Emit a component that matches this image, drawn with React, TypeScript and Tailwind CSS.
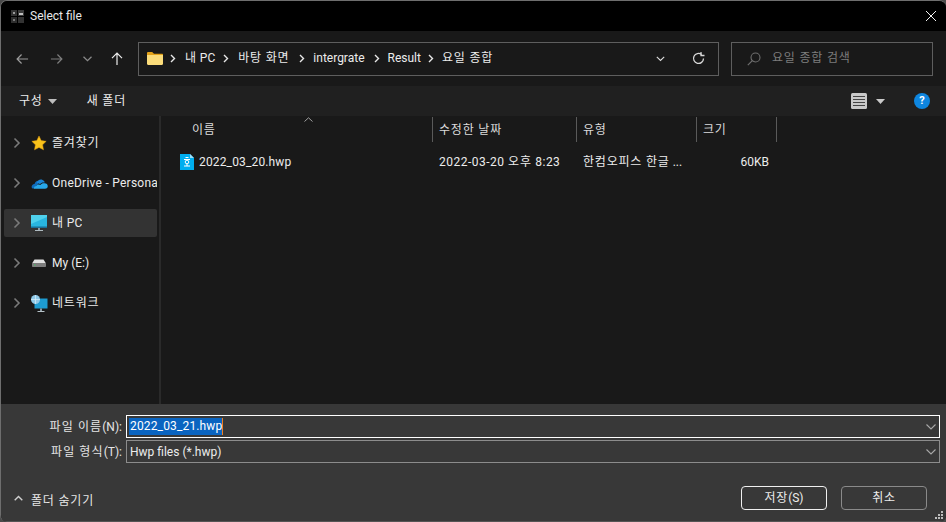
import React from "react";

const font = { fontFamily: 'Roboto, "Noto Sans CJK KR", sans-serif' };

function H({ children, wide }: { children: React.ReactNode; wide?: boolean }) {
  return <span className={wide ? "tracking-[1.1px]" : "tracking-[0.8px]"}>{children}</span>;
}

function Chevron() {
  return (
    <svg width="8" height="12" viewBox="0 0 8 12" className="shrink-0">
      <path d="M1.5 1.5 6 6l-4.5 4.5" fill="none" stroke="#7a7a7a" strokeWidth="1.6" />
    </svg>
  );
}

function Sep() {
  return (
    <svg width="6" height="9" viewBox="0 0 6 9" className="shrink-0">
      <path d="M1 1l3.5 3.5L1 8" fill="none" stroke="#e8e8e8" strokeWidth="1.4" />
    </svg>
  );
}

function Star() {
  return (
    <svg width="16" height="16" viewBox="0 0 16 16">
      <path d="M8 1l2.2 4.6 5 .7-3.6 3.5.9 5L8 12.4l-4.5 2.4.9-5L.8 6.3l5-.7z" fill="#f9c21a" stroke="#e09a10" strokeWidth=".5" />
    </svg>
  );
}

function Cloud() {
  return (
    <svg width="17" height="11" viewBox="0 0 18 12">
      <path d="M1.5 11.5C.2 10.6 0 8.6 1.2 7.5 2 6.7 3 6.5 3.6 6.6 4 4.6 5.6 3 7.6 3c.8 0 1.6.3 2.2.8L3 11.5z" fill="#0f6cbd" />
      <path d="M6 5.5C7 1.2 11.5.3 14 3.3c.4.5.6 1 .7 1.6-2.6-.4-4 .2-5.2 1.8C8.6 5.8 7.4 5.4 6 5.5z" fill="#1a86d8" />
      <path d="M3 11.8h12c2 0 3-1.3 3-2.8 0-1.9-1.5-3.3-3.6-3.2-1.6-.3-3.4.3-4.4 1.8C8.4 6.5 6.3 6.8 5.6 8.6 3.9 8.5 2.6 9.8 3 11.8z" fill="#28a8ea" />
    </svg>
  );
}

function Monitor() {
  return (
    <svg width="16" height="16" viewBox="0 0 16 16">
      <rect x="0" y="0" width="16" height="13" fill="#29b6e0" />
      <path d="M0 0h16v2L0 9z" fill="#4fd0ec" />
      <rect x="0" y="11.5" width="16" height="1.5" fill="#1a6f96" />
      <rect x="7" y="13" width="2" height="2" fill="#8b9aa3" />
      <rect x="4" y="15" width="8" height="1" fill="#aebac0" />
    </svg>
  );
}

function Drive() {
  return (
    <svg width="16" height="16" viewBox="0 0 16 16">
      <path d="M3.5 4.5h9l2.5 4H1z" fill="#e2e2e2" />
      <path d="M1 8.5h14v2.5c0 .6-.4 1-1 1H2c-.6 0-1-.4-1-1z" fill="#7e7e7e" />
      <rect x="3" y="9.5" width="1.5" height="1" fill="#3fbf5f" />
    </svg>
  );
}

function Network() {
  return (
    <svg width="17" height="17" viewBox="0 0 17 17">
      <rect x="3.5" y="3.5" width="13" height="10" fill="#1d9bd1" />
      <rect x="9" y="13.5" width="2" height="2.5" fill="#8b9aa3" />
      <rect x="6.5" y="16" width="7" height="1" fill="#b6c2c8" />
      <circle cx="4.5" cy="4.5" r="4.5" fill="#8fc9e8" />
      <path d="M4.5 0v9M0 4.5h9" stroke="#d8eefa" strokeWidth=".7" />
    </svg>
  );
}

function FolderIcon() {
  return (
    <svg width="16" height="13" viewBox="0 0 16 13">
      <path d="M0 1.2C0 .5.5 0 1.2 0h4L7 1.7h8c.6 0 1 .4 1 1V4H0z" fill="#e3a21a" />
      <path d="M0 3h16v8.8c0 .7-.5 1.2-1.2 1.2H1.2C.5 13 0 12.5 0 11.8z" fill="#fbdc7a" />
    </svg>
  );
}

function HwpIcon() {
  return (
    <svg width="14" height="16" viewBox="0 0 14 16">
      <path d="M0 0h10l4 4v12H0z" fill="#00aeef" />
      <path d="M10 0l4 4h-4z" fill="#9fe0fa" />
      <path d="M5.5 3.5h3M4 5.5h6M4 12h6M7 10v2" stroke="#fff" strokeWidth="1" fill="none" />
      <circle cx="7" cy="8" r="1.8" fill="none" stroke="#fff" strokeWidth="1" />
    </svg>
  );
}

function Nav({ label, icon, active }: { label: React.ReactNode; icon: React.ReactNode; active?: boolean }) {
  return (
    <div className={`h-7 w-[153px] flex items-center rounded-[2px] pl-[9px] ${active ? "bg-[#333333]" : ""}`}>
      <Chevron />
      <div className="w-[18px] ml-[9px] flex justify-center shrink-0">{icon}</div>
      <span className="ml-[4px] whitespace-nowrap overflow-hidden">{label}</span>
    </div>
  );
}

function ColHead({ w, label, pl = 6 }: { w: number; label: string; pl?: number }) {
  return (
    <div
      className="h-[25px] pt-[1px] border-r border-[#5a5a5a] flex items-center shrink-0 text-[#dcdcdc]"
      style={{ width: w, paddingLeft: pl }}
    >
      <H>{label}</H>
    </div>
  );
}

function DropChevron() {
  return (
    <svg width="10" height="6" viewBox="0 0 10 6" className="shrink-0">
      <path d="M.5.5 5 5 9.5.5" fill="none" stroke="#a8a8a8" strokeWidth="1.1" />
    </svg>
  );
}

export default function App() {
  return (
    <div className="w-[946px] h-[522px] bg-[#4a4a4a] overflow-hidden">
      <div
        className="relative w-[946px] h-[522px] bg-[#191919] text-[#f0f0f0] text-[12px] leading-[16px] flex flex-col overflow-hidden rounded-[7px] border-l border-t border-[#6e6e6e]"
        style={font}
      >
        {/* Title bar */}
        <div className="h-[30px] bg-black flex items-center pl-[10px] pr-[10px] shrink-0">
          <svg width="13" height="13" viewBox="0 0 13 13">
            <rect width="6" height="6" fill="#333333" />
            <rect x="7" width="6" height="6" fill="#3a3a3a" />
            <rect y="7" width="6" height="6" fill="#2e2e2e" />
            <rect x="7" y="7" width="6" height="6" fill="#333333" />
            <rect x="2" y="2" width="2" height="2" fill="#9a9a9a" />
            <rect x="8" y="3" width="4" height="2" fill="#c0c0c0" />
            <rect x="2" y="9" width="2" height="2" fill="#777777" />
          </svg>
          <span className="ml-[6px] text-[#e8e8e8]">Select file</span>
          <svg width="10" height="10" viewBox="0 0 10 10" className="ml-auto">
            <path d="M0 0l10 10M10 0L0 10" stroke="#f2f2f2" strokeWidth="1" />
          </svg>
        </div>

        {/* Address row */}
        <div className="h-[55px] flex items-center shrink-0 pr-[13px]">
          <div className="w-[137px] flex items-center pl-[15px] shrink-0">
            <svg width="13" height="12" viewBox="0 0 14 12">
              <path d="M13 6H1.5M6 1.2 1.2 6 6 10.8" fill="none" stroke="#9a9a9a" strokeWidth="1.3" />
            </svg>
            <svg width="13" height="12" viewBox="0 0 14 12" className="ml-[21px]">
              <path d="M1 6h11.5M8 1.2 12.8 6 8 10.8" fill="none" stroke="#7c7c7c" strokeWidth="1.3" />
            </svg>
            <svg width="9" height="6" viewBox="0 0 9 6" className="ml-[20px]">
              <path d="M.5.8 4.5 4.6 8.5.8" fill="none" stroke="#8a8a8a" strokeWidth="1.3" />
            </svg>
            <svg width="12" height="13" viewBox="0 0 12 13" className="ml-[19px]">
              <path d="M6 13V1.2M1 6.2 6 1.2l5 5" fill="none" stroke="#ededed" strokeWidth="1.2" />
            </svg>
          </div>
          <div className="w-[581px] h-[34px] border border-[#5e5e5e] flex items-center pl-[8px] pr-[13px] shrink-0 text-[#ececec]">
            <FolderIcon />
            <span className="ml-[7px]"><Sep /></span>
            <span className="ml-[9px] -mt-[2px]"><H>내</H> PC</span>
            <span className="ml-[8px]"><Sep /></span>
            <span className="ml-[9px] -mt-[2px]"><H>바탕 화면</H></span>
            <span className="ml-[10px]"><Sep /></span>
            <span className="ml-[8px] -mt-[2px]">intergrate</span>
            <span className="ml-[9px]"><Sep /></span>
            <span className="ml-[8px] -mt-[2px]">Result</span>
            <span className="ml-[7px]"><Sep /></span>
            <span className="ml-[8px] -mt-[2px]"><H>요일 종합</H></span>
            <svg width="9" height="6" viewBox="0 0 9 6" className="ml-auto">
              <path d="M.8.8 4.5 4.5 8.2.8" fill="none" stroke="#dddddd" strokeWidth="1.1" />
            </svg>
            <svg width="13" height="13" viewBox="0 0 13 13" className="ml-[27px]">
              <path d="M11.5 6.5A5 5 0 1 1 9.6 2.5" fill="none" stroke="#d8d8d8" strokeWidth="1.3" />
              <path d="M9 0v3.5h3.5" fill="none" stroke="#d8d8d8" strokeWidth="1.3" />
            </svg>
          </div>
          <div className="ml-[12px] flex-1 h-[34px] border border-[#5e5e5e] flex items-center pl-[15px] text-[#7d7d7d]">
            <svg width="14" height="14" viewBox="0 0 14 14">
              <circle cx="8.5" cy="5.5" r="4.5" fill="none" stroke="#6e6e6e" strokeWidth="1.1" />
              <path d="M5.3 8.7.8 13.2" stroke="#6e6e6e" strokeWidth="1.2" />
            </svg>
            <span className="ml-[11px] -mt-[1px]"><H>요일 종합 검색</H></span>
          </div>
        </div>

        {/* Command bar */}
        <div className="h-[30px] bg-[#202020] flex items-center shrink-0 pl-[18px]">
          <span className="text-[#ececec]"><H>구성</H></span>
          <svg width="9" height="5" viewBox="0 0 9 5" className="ml-[5px]">
            <path d="M0 0h9L4.5 5z" fill="#bdbdbd" />
          </svg>
          <span className="ml-[30px] text-[#ececec]"><H>새 폴더</H></span>
          <svg width="16" height="16" viewBox="0 0 16 16" className="ml-auto">
            <rect width="16" height="16" rx="1.5" fill="#c9c9c9" />
            <path d="M2 3.5h12M2 6.5h12M2 9.5h12M2 12.5h12" stroke="#444444" strokeWidth="1" />
          </svg>
          <svg width="9" height="5" viewBox="0 0 9 5" className="ml-[9px]">
            <path d="M0 0h9L4.5 5z" fill="#c9c9c9" />
          </svg>
          <div className="ml-[29px] mr-[16px] w-4 h-4 rounded-full bg-[#0e86e0] text-white font-bold text-[11px] leading-4 text-center">?</div>
        </div>

        {/* Content */}
        <div className="flex-1 flex min-h-0">
          <div className="w-[158px] shrink-0 pt-[13px] pl-[3px] flex flex-col gap-[12px] text-[#ececec]">
            <Nav label={<H>즐겨찾기</H>} icon={<Star />} />
            <Nav label={<span className="tracking-[0.25px]">OneDrive - Persona</span>} icon={<Cloud />} />
            <Nav label={<><H>내</H> PC</>} icon={<Monitor />} active />
            <Nav label="My (E:)" icon={<Drive />} />
            <Nav label={<H>네트워크</H>} icon={<Network />} />
          </div>
          <div className="w-[2px] bg-[#2a2a2a] shrink-0" />
          <div className="flex-1 relative">
            <svg width="9" height="5" viewBox="0 0 9 5" className="absolute left-[143px] top-[1px]">
              <path d="M.5 4.5 4.5.8l4 3.7" fill="none" stroke="#a0a0a0" strokeWidth="1" />
            </svg>
            <div className="flex h-[25px] mt-[1px]">
              <ColHead w={272} label="이름" pl={31} />
              <ColHead w={144} label="수정한 날짜" />
              <ColHead w={120} label="유형" />
              <ColHead w={80} label="크기" />
            </div>
            <div className="flex items-center h-[20px] mt-[10px] text-[#ececec]">
              <div className="w-[272px] pl-[19px] flex items-center gap-[5px] shrink-0">
                <HwpIcon />
                <span className="tracking-[0.15px]">2022_03_20.hwp</span>
              </div>
              <div className="w-[144px] pl-[6px] shrink-0 tracking-[0.5px]">2022-03-20 <H>오후</H> 8:23</div>
              <div className="w-[120px] pl-[6px] shrink-0"><H>한컴오피스 한글</H> ...</div>
              <div className="w-[72px] text-right shrink-0">60KB</div>
            </div>
          </div>
        </div>

        {/* Bottom */}
        <div className="h-[118px] bg-[#383838] shrink-0 flex flex-col border-b border-[#555555]">
          <div className="flex items-center mt-[11px] h-[23px] pr-[6px]">
            <div className="w-[125px] pr-[4px] text-right text-[#e6e6e6] shrink-0"><H wide>파일 이름</H>(N):</div>
            <div className="flex-1 h-[23px] border border-white flex items-center pl-[2px] pr-[3px]">
              <span className="bg-[#0a64c0] text-white leading-[17px] pl-[1px] border-r border-[#f08020] tracking-[0.15px]">2022_03_21.hwp</span>
              <span className="ml-auto"><DropChevron /></span>
            </div>
          </div>
          <div className="flex items-center mt-[2px] h-[23px] pr-[6px]">
            <div className="w-[125px] pr-[4px] text-right text-[#e6e6e6] shrink-0"><H wide>파일 형식</H>(T):</div>
            <div className="flex-1 h-[23px] border border-[#8c8c8c] flex items-center pl-[3px] pr-[3px] text-[#ececec]">
              <span>Hwp files (*.hwp)</span>
              <span className="ml-auto"><DropChevron /></span>
            </div>
          </div>
          <div className="flex items-center mt-[23px] pl-[13px] pr-[19px]">
            <svg width="9" height="6" viewBox="0 0 9 6">
              <path d="M.7 5.2 4.5 1.4l3.8 3.8" fill="none" stroke="#d0d0d0" strokeWidth="1.4" />
            </svg>
            <span className="ml-[8px] text-[#e6e6e6] mt-[5px]"><H>폴더 숨기기</H></span>
            <div className="ml-auto w-[86px] h-[24px] border border-[#f0f0f0] rounded-[4px] text-center leading-[22px] text-[#ececec]"><H>저장</H>(S)</div>
            <div className="ml-[14px] w-[86px] h-[24px] border border-[#8a8a8a] rounded-[4px] text-center leading-[22px] text-[#ececec]"><H>취소</H></div>
          </div>
        </div>

        {/* Size grip */}
        <svg width="9" height="9" viewBox="0 0 9 9" className="absolute right-[2px] bottom-[2px]">
          <path d="M6 0h2v2H6zM3 3h2v2H3zM6 3h2v2H6zM0 6h2v2H0zM3 6h2v2H3zM6 6h2v2H6z" fill="#bdbdbd" />
        </svg>
      </div>
    </div>
  );
}
